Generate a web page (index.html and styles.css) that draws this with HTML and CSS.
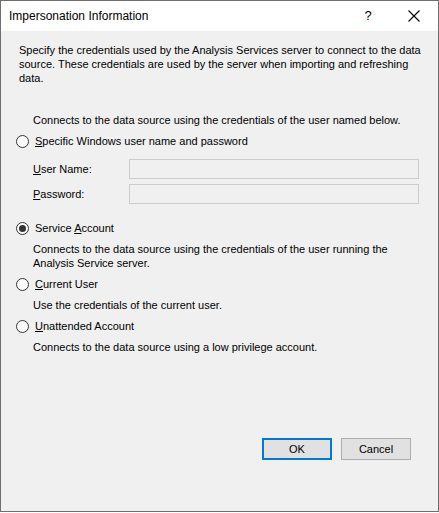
FILE: index.html
```html
<!DOCTYPE html>
<html lang="en">

<head>
    <meta charset="UTF-8">
    <title>Impersonation Information</title>
    <link rel="stylesheet" href="styles.css">
</head>

<body>
    <div class="window">
        <div class="titlebar">
            <span class="title">Impersonation Information</span>
            <span class="help">?</span>
            <span class="close">
                <svg width="12" height="12" viewBox="0 0 12 12">
                    <path d="M0.5 0.5 L11.5 11.5 M11.5 0.5 L0.5 11.5" stroke="#000" stroke-width="1.1" fill="none" />
                </svg>
            </span>
        </div>

        <div class="content">
            <p class="intro">Specify the credentials used by the Analysis Services server to connect to the data
                source. These credentials are used by the server when importing and refreshing data.</p>

            <p class="note">Connects to the data source using the credentials of the user named below.</p>

            <div class="option">
                <span class="radio"></span>
                <span><u>S</u>pecific Windows user name and password</span>
            </div>

            <div class="fields">
                <div class="field">
                    <span class="field-label"><u>U</u>ser Name:</span>
                    <span class="textbox"></span>
                </div>
                <div class="field">
                    <span class="field-label"><u>P</u>assword:</span>
                    <span class="textbox"></span>
                </div>
            </div>

            <div class="option first">
                <span class="radio checked"></span>
                <span>Service <u>A</u>ccount</span>
            </div>
            <p class="desc">Connects to the data source using the credentials of the user running the Analysis
                Service server.</p>

            <div class="option">
                <span class="radio"></span>
                <span><u>C</u>urrent User</span>
            </div>
            <p class="desc">Use the credentials of the current user.</p>

            <div class="option">
                <span class="radio"></span>
                <span><u>U</u>nattended Account</span>
            </div>
            <p class="desc">Connects to the data source using a low privilege account.</p>
        </div>

        <div class="buttons">
            <button class="btn default">OK</button>
            <button class="btn">Cancel</button>
        </div>
    </div>
</body>

</html>
```

FILE: styles.css
```css
* {
    padding: 0px;
    margin: 0px;
    box-sizing: border-box;
}

body {
    font-family: "Liberation Sans", Arial, sans-serif;
    font-size: 11px;
    line-height: 14px;
    color: #000;
    background-color: #ffffff;
}

.window {
    width: 439px;
    height: 512px;
    border: 1px solid #6f6f6f;
    background-color: #f0f0f0;
    display: flex;
    flex-direction: column;
}

.titlebar {
    height: 30px;
    background-color: #ffffff;
    display: flex;
    align-items: center;
    padding-left: 8px;
    font-size: 12px;
}

.title {
    flex: 1;
}

.help {
    width: 14px;
    text-align: center;
    margin-right: 33px;
    font-size: 13px;
}

.close {
    display: flex;
    margin-right: 18px;
}

.content {
    flex: 1;
    padding: 12px 18px 0px 18px;
}

.intro {
    width: 405px;
}

.note {
    margin-top: 28px;
    padding-left: 14px;
}

.option {
    display: flex;
    align-items: center;
    gap: 6px;
    margin-top: 7px;
    margin-left: -3px;
}

.option.first {
    margin-top: 17px;
}

.radio {
    width: 13px;
    height: 13px;
    border: 1px solid #333333;
    border-radius: 50%;
    background-color: #ffffff;
    display: flex;
    justify-content: center;
    align-items: center;
}

.radio.checked::after {
    content: "";
    width: 7px;
    height: 7px;
    border-radius: 50%;
    background-color: #333333;
}

.fields {
    margin-top: 11px;
    padding-left: 14px;
    display: flex;
    flex-direction: column;
    gap: 5px;
}

.field {
    display: flex;
    align-items: center;
}

.field-label {
    width: 96px;
}

.textbox {
    width: 290px;
    height: 20px;
    border: 1px solid #cccccc;
    background-color: #f0f0f0;
}

.desc {
    margin-top: 7px;
    padding-left: 14px;
    width: 390px;
}

.buttons {
    display: flex;
    justify-content: flex-end;
    gap: 9px;
    padding: 0px 27px 51px 0px;
}

.btn {
    width: 70px;
    height: 22px;
    font-family: inherit;
    font-size: 11px;
    background-color: #e1e1e1;
    border: 1px solid #adadad;
    color: #000;
}

.btn.default {
    border: 2px solid #0078d7;
}
```
